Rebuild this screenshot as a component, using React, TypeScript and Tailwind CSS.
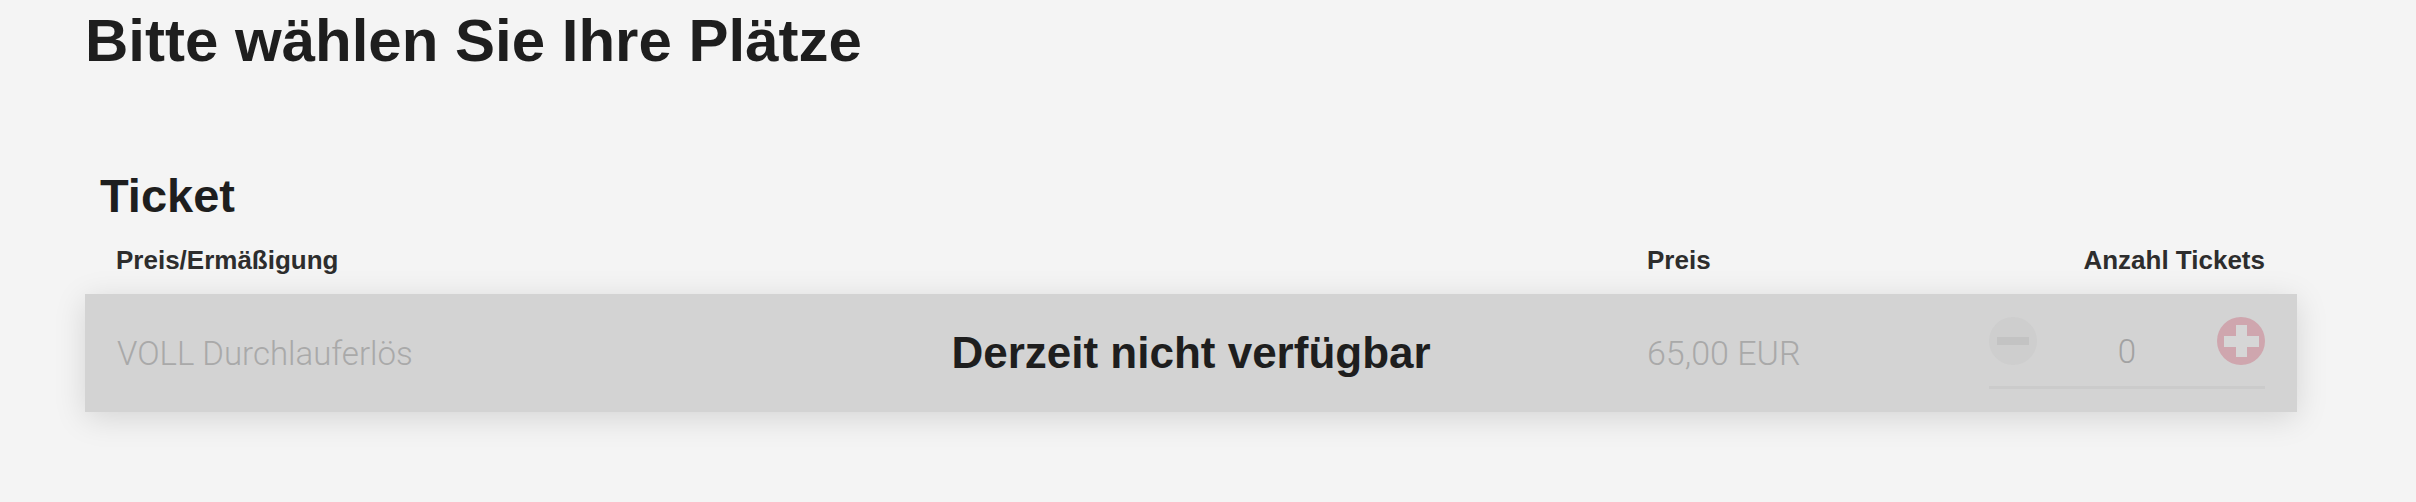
const heading = { fontFamily: '"Liberation Sans", Arial, sans-serif' };
const light = { fontFamily: 'Roboto, "Liberation Sans", sans-serif' };

function Counter({ value }: { value: number }) {
  return (
    <div className="flex h-[72px] w-[276px] items-start justify-between border-b-[3px] border-[#cbcbcb]">
      {/* minus (disabled) */}
      <button className="flex h-12 w-12 items-center justify-center rounded-full bg-[#cecece]">
        <span className="block h-2 w-8 bg-[#c3c3c3]" />
      </button>
      <span className="mt-[18px] text-[33px] font-light leading-none text-[#a2a2a2]" style={light}>
        {value}
      </span>
      {/* plus */}
      <button className="relative flex h-12 w-12 items-center justify-center rounded-full bg-[#cfa6ae]">
        <span className="absolute h-[11px] w-[35px] bg-[#d6d6d6]" />
        <span className="absolute h-[32px] w-[11px] bg-[#d6d6d6]" />
      </button>
    </div>
  );
}

export default function App() {
  return (
    <div className="min-h-[502px] w-full bg-[#f4f4f4] pl-[85px] pr-[119px]" style={heading}>
      <h1 className="pt-[11px] text-[60px] font-bold leading-none text-[#1e1e1e]">
        Bitte wählen Sie Ihre Plätze
      </h1>

      <h2 className="mt-[101px] pl-[15px] text-[47px] font-bold leading-none text-[#1e1e1e]">Ticket</h2>

      {/* column headers */}
      <div className="mt-[28px] flex h-[47px] items-start pl-[31px] pr-[32px] text-[26px] font-bold leading-none text-[#2d2d2d]">
        <div className="flex-1">Preis/Ermäßigung</div>
        <div className="w-[342px]">Preis</div>
        <div className="w-[276px] text-right">Anzahl Tickets</div>
      </div>

      {/* ticket row (unavailable) */}
      <div className="relative flex h-[118px] items-center bg-[#d3d3d3] pl-[32px] pr-[32px] shadow-[0_6px_30px_rgba(0,0,0,0.13)]">
        <div className="flex-1 text-[33px] font-light leading-none text-[#a9a9a9]" style={light}>
          VOLL Durchlauferlös
        </div>
        <div className="w-[342px] text-[34px] font-light leading-none text-[#a9a9a9]" style={light}>
          65,00 EUR
        </div>
        <Counter value={0} />
        <div className="absolute inset-0 flex items-center justify-center">
          <span className="text-[44px] font-bold leading-none text-[#1e1e1e]">Derzeit nicht verfügbar</span>
        </div>
      </div>
    </div>
  );
}
